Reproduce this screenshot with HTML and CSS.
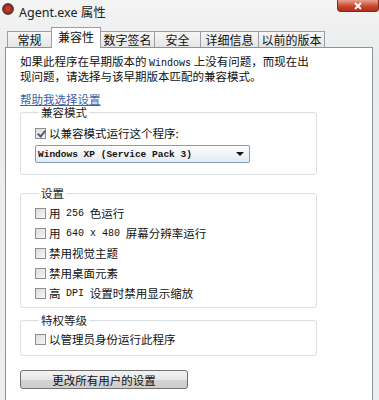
FILE: index.html
```html
<!DOCTYPE html>
<html lang="zh-CN">
<head>
  <meta charset="UTF-8">
  <title>Agent.exe 属性</title>
  <link rel="stylesheet" href="styles.css">
</head>
<body>
  <div class="window">
    <div class="titlebar">
      <span class="app-icon"></span>
      <span class="title">Agent.exe 属性</span>
      <span class="close-btn">
        <svg width="10" height="8" viewBox="0 0 10 8"><path d="M2 1 L8 7 M8 1 L2 7" stroke="#fff" stroke-width="1.8" fill="none"/></svg>
      </span>
    </div>

    <div class="tabs">
      <div class="tab t1">常规</div>
      <div class="tab active t2">兼容性</div>
      <div class="tab t3">数字签名</div>
      <div class="tab t4">安全</div>
      <div class="tab t5">详细信息</div>
      <div class="tab t6">以前的版本</div>
    </div>

    <div class="panel">
      <p class="intro">如果此程序在早期版本的 <span class="mono">Windows</span> 上没有问题，而现在出<br>现问题，请选择与该早期版本匹配的兼容模式。</p>
      <a class="help-link" href="#">帮助我选择设置</a>

      <fieldset class="group g-compat">
        <legend>兼容模式</legend>
        <label class="row"><span class="check checked"></span>以兼容模式运行这个程序:</label>
        <div class="select">
          <span class="mono">Windows XP (Service Pack 3)</span>
          <span class="arrow"></span>
        </div>
      </fieldset>

      <fieldset class="group g-settings">
        <legend>设置</legend>
        <label class="row"><span class="check"></span>用 <span class="mono">256</span> 色运行</label>
        <label class="row"><span class="check"></span>用 <span class="mono">640 x 480</span> 屏幕分辨率运行</label>
        <label class="row"><span class="check"></span>禁用视觉主题</label>
        <label class="row"><span class="check"></span>禁用桌面元素</label>
        <label class="row"><span class="check"></span>高 <span class="mono">DPI</span> 设置时禁用显示缩放</label>
      </fieldset>

      <fieldset class="group g-priv">
        <legend>特权等级</legend>
        <label class="row"><span class="check"></span>以管理员身份运行此程序</label>
      </fieldset>

      <button class="all-users">更改所有用户的设置</button>
    </div>
  </div>
</body>
</html>
```

FILE: styles.css
```css
* {
  box-sizing: border-box;
}
body {
  margin: 0;
  font-family: "Noto Sans", "Noto Sans CJK SC", sans-serif;
  font-size: 11.5px;
  color: #111;
  background: #eceeef;
}
.window {
  width: 379px;
  height: 400px;
  overflow: hidden;
  background: linear-gradient(to bottom, #f4f4f4, #e9ebec 60px, #eceeef);
}
.titlebar {
  height: 22px;
  display: flex;
  align-items: flex-start;
  padding-left: 2px;
}
.app-icon {
  width: 12px;
  height: 12px;
  margin-top: 3px;
  border-radius: 50%;
  background: radial-gradient(circle, #c0392b 30%, #6b1f1a 75%);
  border: 1px solid #5a4a48;
}
.title {
  margin-left: 5px;
  margin-top: 2px;
  font-size: 12.5px;
  color: #222;
}
.close-btn {
  margin-left: auto;
  width: 42px;
  height: 12px;
  border-radius: 0 0 4px 4px;
  background: linear-gradient(to bottom, #e8a08f, #c8432a 60%, #b0301c);
  border: 1px solid #7d2a1d;
  border-top: none;
  display: flex;
  align-items: center;
  justify-content: center;
}
.tabs {
  display: flex;
  align-items: flex-end;
  height: 25px;
  padding-left: 7px;
}
.tab {
  height: 16px;
  border: 1px solid #9b9ea3;
  border-bottom: none;
  margin-right: -1px;
  background: linear-gradient(to bottom, #f6f6f6, #e4e5e6);
  font-family: "Noto Sans CJK SC", sans-serif;
  font-size: 12px;
  line-height: 15px;
  text-align: center;
}
.tab.active {
  height: 21px;
  margin-bottom: -1px;
  position: relative;
  z-index: 1;
  background: #fff;
  line-height: 18px;
}
.t1 { width: 45px; }
.t2 { width: 50px; }
.t3 { width: 55px; }
.t4 { width: 47px; }
.t5 { width: 59px; }
.t6 { width: 67px; }
.panel {
  margin-left: 5px;
  width: 368px;
  height: 360px;
  background: #fff;
  border: 1px solid #8e9196;
  border-bottom: none;
  padding: 7px 0 0 14px;
  font-family: "Noto Sans CJK SC", sans-serif;
}
.intro {
  margin: 0;
  height: 26px;
  line-height: 13px;
}
.mono {
  font-family: "Liberation Mono", monospace;
  font-size: 10px;
}
.help-link {
  display: block;
  width: fit-content;
  height: 13px;
  margin-top: 12px;
  line-height: 13px;
  color: #3a62a8;
  text-decoration: underline;
}
.group {
  width: 297px;
  margin: 0;
  border: 1px solid #d8dee3;
  border-radius: 3px;
  padding: 0 0 0 14px;
}
.group legend {
  margin-left: 4px;
  padding: 0 2px;
  height: 13px;
  line-height: 13px;
  color: #222;
}
.g-compat {
  margin-top: 0;
  padding-top: 6px;
  padding-bottom: 11px;
}
.g-settings {
  margin-top: 12px;
  padding-top: 3px;
  padding-bottom: 4px;
}
.g-priv {
  margin-top: 6px;
  padding-top: 2px;
  padding-bottom: 6px;
}
.row {
  display: flex;
  align-items: center;
  height: 20px;
  gap: 3px;
  white-space: pre;
}
.g-compat .row {
  height: 16px;
}
.check {
  width: 11px;
  height: 11px;
  border: 1px solid #8e8f8f;
  background: linear-gradient(135deg, #dcdcdc, #f6f6f6);
  position: relative;
}
.check.checked::after {
  content: "";
  position: absolute;
  left: 3px;
  top: 0px;
  width: 3px;
  height: 6px;
  border: solid #4a5d7c;
  border-width: 0 2px 2px 0;
  transform: rotate(40deg);
}
.select {
  margin-top: 4px;
  width: 215px;
  height: 18px;
  border: 1px solid #7f9db9;
  border-radius: 2px;
  background: linear-gradient(to bottom, #fdfdfe, #e5ebf1);
  display: flex;
  align-items: center;
  justify-content: space-between;
  padding: 0 5px 0 2px;
}
.select .mono {
  font-size: 9.5px;
  font-weight: bold;
  color: #111;
}
.arrow {
  width: 0;
  height: 0;
  border-left: 4px solid transparent;
  border-right: 4px solid transparent;
  border-top: 4px solid #111;
}
.all-users {
  display: block;
  margin-top: 14px;
  width: 168px;
  height: 19px;
  padding: 0;
  border: 1px solid #707070;
  border-radius: 3px;
  background: linear-gradient(to bottom, #f3f3f3, #e6e6e6 50%, #d4d4d4 51%, #cdcdcd);
  font-family: "Noto Sans CJK SC", sans-serif;
  font-size: 11.5px;
  color: #111;
}
```
